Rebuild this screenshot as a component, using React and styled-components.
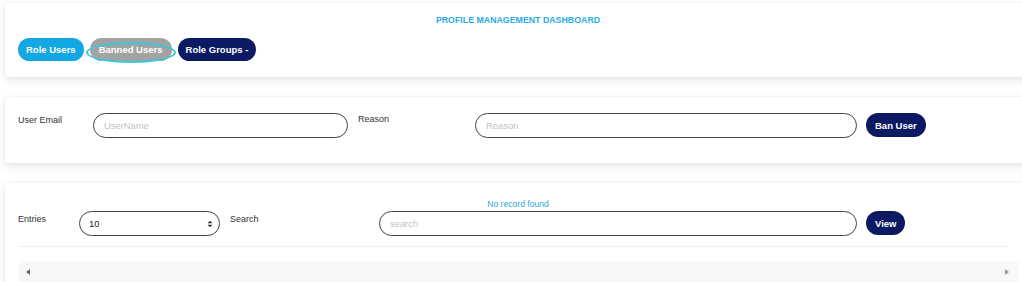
import React from "react";
import styled, { createGlobalStyle } from "styled-components";

const Global = createGlobalStyle`
  html, body { margin: 0; padding: 0; background: #fff; overflow: hidden; }
  body { font-family: "Liberation Sans", Arial, sans-serif; }
  * { box-sizing: border-box; }
`;

const Page = styled.div`
  width: 1022px;
  height: 282px;
  overflow: hidden;
  padding-top: 3px;
`;

const Card = styled.section`
  background: #fff;
  margin: 0 -20px ${(p) => p.$gap || 20}px 5px;
  height: ${(p) => p.$h}px;
  box-shadow: 0 3px 8px rgba(0, 0, 0, 0.1), 0 0 3px rgba(0, 0, 0, 0.05);
  border-radius: 3px;
  padding: ${(p) => p.$pad || "0"};
`;

const Title = styled.h1`
  margin: 0;
  width: 1026px;
  text-align: center;
  color: #29abe2;
  font-size: 8.8px;
  font-weight: 700;
  line-height: 10px;
  padding-top: 12px;
`;

const Tabs = styled.div`
  display: flex;
  gap: 6px;
  padding: 13px 0 0 13px;
`;

const Pill = styled.button`
  height: ${(p) => p.$h || 23}px;
  border: none;
  border-radius: 12px;
  padding: 0 ${(p) => p.$px || 7}px;
  font-family: "Liberation Sans", Arial, sans-serif;
  font-size: 9.5px;
  font-weight: 700;
  color: #fff;
  background: ${(p) => p.$bg};
  cursor: pointer;
  position: relative;
  ${(p) =>
    p.$focus &&
    `
    &::after {
      content: "";
      position: absolute;
      left: -4px; right: -4px; top: 4px; bottom: -2px;
      border: 2px solid #3cc8dc;
      border-radius: 50%;
    }
  `}
`;

const Row = styled.div`
  display: flex;
  align-items: flex-start;
  padding-left: 13px;
`;

const Label = styled.label`
  width: ${(p) => p.$w}px;
  flex: none;
  font-size: 9px;
  color: #333;
  padding-top: ${(p) => p.$pt || 2}px;
  line-height: 10px;
`;

const Field = styled.input`
  width: ${(p) => p.$w}px;
  flex: none;
  height: 25px;
  border: 1px solid #444;
  border-radius: 13px;
  padding: 0 10px;
  font-family: "Liberation Sans", Arial, sans-serif;
  font-size: 9.4px;
  color: #333;
  background: #fff;
  outline: none;
  &::placeholder { color: #c2c2c2; }
`;

const SelectBox = styled.div`
  width: ${(p) => p.$w}px;
  flex: none;
  height: 25px;
  border: 1px solid #444;
  border-radius: 13px;
  padding: 0 6px 0 9px;
  display: flex;
  align-items: center;
  justify-content: space-between;
  font-size: 9.4px;
  color: #222;
`;

const Gap = styled.div`
  width: ${(p) => p.$w}px;
  flex: none;
`;

const Caption = styled.div`
  width: 1026px;
  text-align: center;
  font-size: 8.6px;
  color: #29abe2;
  line-height: 10px;
  height: 12px;
`;

const Rule = styled.hr`
  margin: 10px 0 0 13px;
  width: 990px;
  border: none;
  border-top: 1px solid #eee;
`;

const ScrollTrack = styled.div`
  margin: 14px 0 0 13px;
  width: 1000px;
  height: 22px;
  background: #f8f8f8;
  display: flex;
  align-items: center;
  justify-content: space-between;
  padding: 0 9px 0 8px;
`;

const Arrow = styled.span`
  width: 0;
  height: 0;
  border-top: 3.5px solid transparent;
  border-bottom: 3.5px solid transparent;
  ${(p) =>
    p.$dir === "left"
      ? "border-right: 4px solid #666;"
      : "border-left: 4px solid #999;"}
`;

export default function App() {
  return (
    <Page>
      <Global />
      <Card $h={74} $gap={20}>
        <Title>PROFILE MANAGEMENT DASHBOARD</Title>
        <Tabs>
          <Pill $bg="#13a8e3" $px={8}>Role Users</Pill>
          <Pill $bg="#a3a3a3" $px={9} $focus>Banned Users</Pill>
          <Pill $bg="#0b1a62" $px={8}>Role Groups -</Pill>
        </Tabs>
      </Card>
      <Card $h={66} $gap={20} $pad="16px 0 0 0">
        <Row>
          <Label $w={75} $pt={2}>User Email</Label>
          <Field $w={255} placeholder="UserName" />
          <Gap $w={10} />
          <Label $w={117} $pt={1}>Reason</Label>
          <Field $w={382} placeholder="Reason" />
          <Gap $w={9} />
          <Pill $bg="#0b1a62" $px={9} $h={24}>Ban User</Pill>
        </Row>
      </Card>
      <Card $h={130} $gap={0} $pad="16px 0 0 0">
        <Caption>No record found</Caption>
        <Row>
          <Label $w={61} $pt={3}>Entries</Label>
          <SelectBox $w={141}>
            <span>10</span>
            <svg width="6" height="8" viewBox="0 0 6 8">
              <path d="M0.5 3.2 L3 0.8 L5.5 3.2 Z M0.5 4.8 L3 7.2 L5.5 4.8 Z" fill="#333" />
            </svg>
          </SelectBox>
          <Gap $w={10} />
          <Label $w={149} $pt={3}>Search</Label>
          <Field $w={478} placeholder="search" />
          <Gap $w={9} />
          <Pill $bg="#0b1a62" $px={9} $h={24}>View</Pill>
        </Row>
        <Rule />
        <ScrollTrack>
          <Arrow $dir="left" />
          <Arrow $dir="right" />
        </ScrollTrack>
      </Card>
    </Page>
  );
}
